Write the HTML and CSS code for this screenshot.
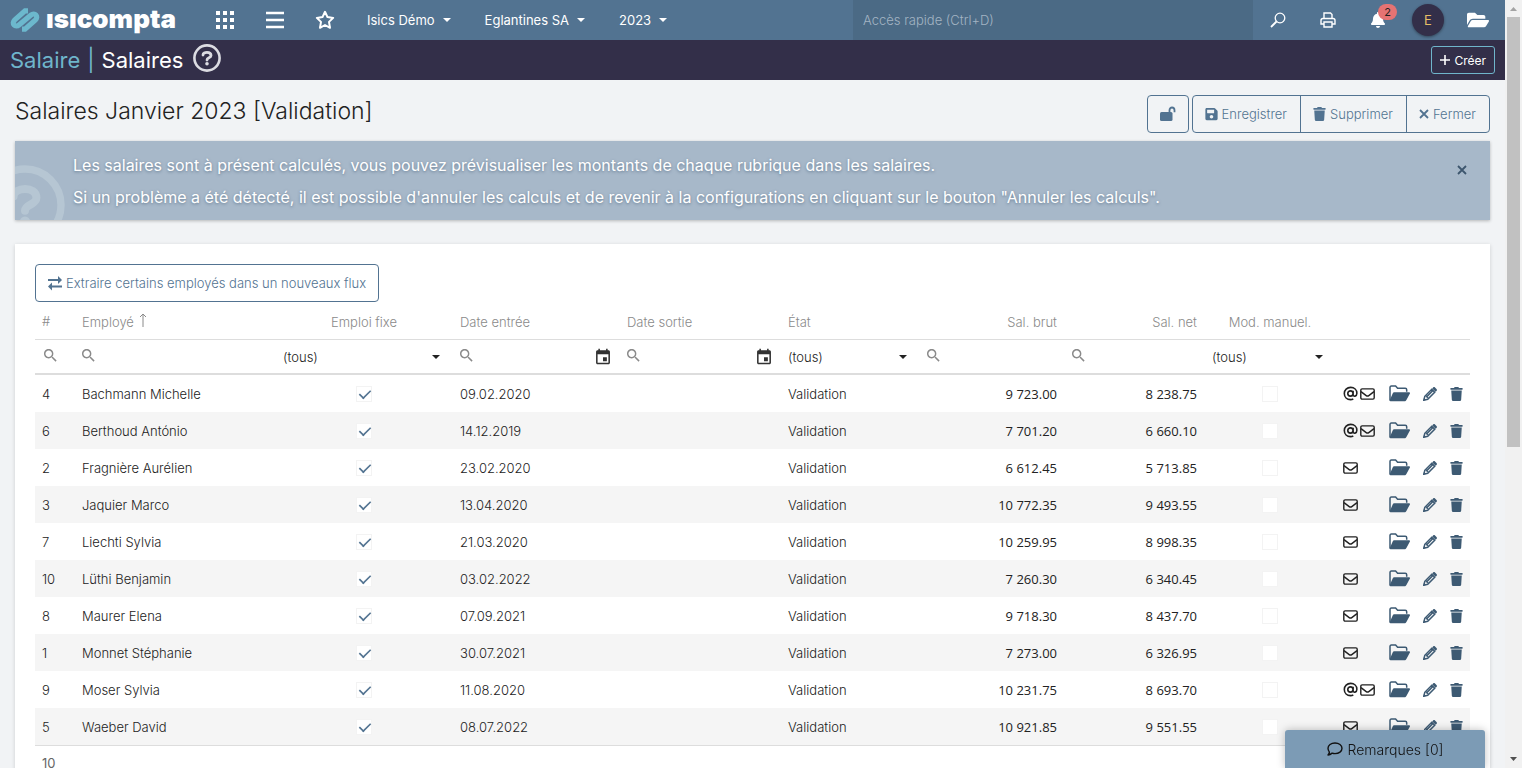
FILE: index.html
```html
<!DOCTYPE html>
<html lang="fr">
	<head>
		<meta charset="UTF-8" />
		<meta name="viewport" content="width=device-width, initial-scale=1.0" />
		<title>Isicompta - Salaires</title>
		<link rel="stylesheet" href="styles.css">
	</head>
	<body>
		<!-- Icon sprite -->
		<svg class="sprite" aria-hidden="true">
			<symbol id="i-search" viewBox="3 3 18 18"><path d="M15.5 14h-.79l-.28-.27C15.41 12.59 16 11.11 16 9.5 16 5.91 13.09 3 9.5 3S3 5.91 3 9.5 5.91 16 9.5 16c1.61 0 3.09-.59 4.23-1.57l.27.28v.79l5 4.99L20.49 19l-4.99-5zm-6 0C7.01 14 5 11.99 5 9.5S7.01 5 9.5 5 14 7.01 14 9.5 11.99 14 9.5 14z"/></symbol>
			<symbol id="i-event" viewBox="2 0 20 22"><path d="M17 12h-5v5h5v-5zM16 1v2H8V1H6v2H5c-1.11 0-1.99.9-1.99 2L3 19c0 1.1.89 2 2 2h14c1.1 0 2-.9 2-2V5c0-1.1-.9-2-2-2h-1V1h-2zm3 18H5V8h14v11z"/></symbol>
			<symbol id="i-caret" viewBox="0 0 10 5"><path d="M0 0h10L5 5z"/></symbol>
			<symbol id="i-trash" viewBox="0 0 448 512"><path d="M432 32H312l-9.4-18.7A24 24 0 0 0 281.1 0H166.8a23.72 23.72 0 0 0-21.4 13.3L136 32H16A16 16 0 0 0 0 48v32a16 16 0 0 0 16 16h416a16 16 0 0 0 16-16V48a16 16 0 0 0-16-16zM32 128l21.2 339a48 48 0 0 0 47.9 45h245.8a48 48 0 0 0 47.9-45L416 128z"/></symbol>
			<symbol id="i-close" viewBox="0 0 10 10"><path d="M1 1l8 8M9 1L1 9" fill="none" stroke="currentColor" stroke-width="1.8"/></symbol>
			<symbol id="i-at" viewBox="0 0 16 16"><path d="M10.8 5v4.3c0 2.5 4 2 4-1.6C14.8 4 12 1.5 8.2 1.5 4.3 1.5 1.4 4.3 1.4 8c0 3.9 2.9 6.500 6.6 6.500 1.2 0 2.2-.3 3-.7M10.700 8a2.800 2.800 0 1 1-5.600 0 2.800 2.800 0 0 1 5.600 0z" fill="none" stroke="currentColor" stroke-width="1.7"/></symbol>
			<symbol id="i-mail" viewBox="0 0 15 12"><g fill="none" stroke="currentColor" stroke-width="1.4"><rect x=".8" y=".9" width="13.4" height="10.2" rx="1.3"/><path d="M1 3.600l5.200 4c.8.6 1.800.6 2.600 0l5.200-4"/></g></symbol>
			<symbol id="i-folder" viewBox="0 0 21 17"><path d="M1 15.500V2.500C1 1.600 1.500 1 2.400 1h4.200l2 2.300h7.600c.9 0 1.500.6 1.500 1.500v2" fill="none" stroke="currentColor" stroke-width="1.5"/><path d="M5.200 7.300h15c.7 0 1 .6.700 1.200l-3.500 6.400c-.5.9-1 1.300-2 1.300H1.500c-.7 0-1-.5-.7-1.100l3-6.800c.3-.6.7-1 1.400-1z"/></symbol>
			<symbol id="i-pencil" viewBox="0 0 14 14"><path d="M9.200 1.400l.9-.9c.6-.6 1.300-.6 1.900 0l1.500 1.500c.6.6.6 1.300 0 1.900l-.9.9z"/><path d="M8.800 2.300l2.900 2.900-7 7-3.900 1 1-3.900zM3.200 9.100l1.700 1.700" fill="none" stroke="currentColor" stroke-width="1.5"/><path d="M4 9.500l5.700-5.700" stroke="currentColor" stroke-width="1.6"/><path d="M.3 13.700l.7-2.600 1.900 1.900z"/></symbol>
			<symbol id="i-help" viewBox="0 0 28 28"><circle cx="14" cy="14" r="12.6" fill="none" stroke="currentColor" stroke-width="2.6"/><path d="M10 11c0-3.400 8-3.800 8 .5 0 2.500-4 2.200-4 4.500" fill="none" stroke="currentColor" stroke-width="2.8" stroke-linecap="round"/><circle cx="14" cy="19.800" r="1.8"/></symbol>
		</svg>

		<div class="page">
			<header class="topbar">
				<a class="logo" href="#">
					<svg viewBox="0 0 30 24" aria-hidden="true">
						<path d="M18 2.800h-3L4.800 11.800C.8 15.800 5.500 20 9 17L21 7c3.500-3 8.200 1.200 4.200 5.200L15 21.200h-3" fill="none" stroke="currentColor" stroke-width="5.200"/>
					</svg>
					<span>ısıcompta</span>
				</a>
				<nav class="menu">
					<button class="icon-btn" aria-label="Applications">
						<svg class="ic18" viewBox="0 0 18 18"><path d="M0 0h4v4H0zM7 0h4v4H7zM14 0h4v4h-4zM0 7h4v4H0zM7 7h4v4H7zM14 7h4v4h-4zM0 14h4v4H0zM7 14h4v4H7zM14 14h4v4h-4z"/></svg>
					</button>
					<button class="icon-btn" aria-label="Menu">
						<svg class="ic18" viewBox="0 0 18 18"><path d="M0 2h18M0 9h18M0 16h18" stroke="currentColor" stroke-width="2.6"/></svg>
					</button>
					<button class="icon-btn" aria-label="Favoris">
						<svg class="ic20" viewBox="0 0 20 20"><path d="M10 1.800l2.500 5.300 5.700.8-4.200 4 1 5.900-5-2.800-5 2.800 1-5.900-4.200-4 5.700-.8z" fill="none" stroke="currentColor" stroke-width="2" stroke-linejoin="round"/></svg>
					</button>
					<button class="drop">Isics Démo <svg><use href="#i-caret"/></svg></button>
					<button class="drop">Eglantines SA <svg><use href="#i-caret"/></svg></button>
					<button class="drop">2023 <svg><use href="#i-caret"/></svg></button>
				</nav>
				<input class="quick" type="text" placeholder="Accès rapide (Ctrl+D)" aria-label="Accès rapide">
				<div class="tools">
					<button class="icon-btn" aria-label="Rechercher">
						<svg class="ic16" viewBox="0 0 16 16"><g fill="none" stroke="currentColor" stroke-width="1.3"><circle cx="10" cy="6" r="4.8"/><path d="M6.500 9.500L1 15" stroke-width="1.8"/></g></svg>
					</button>
					<button class="icon-btn" aria-label="Imprimer">
						<svg class="ic16" viewBox="0 0 16 16"><path d="M4 6V1h6.500L12 2.500V6M4 12H1V8.500C1 7 1.500 6.500 3 6.500h10c1.500 0 2 .5 2 2V12h-3M4 10h8v5H4z" fill="none" stroke="currentColor" stroke-width="1.4"/></svg>
					</button>
					<button class="icon-btn bell" aria-label="Notifications">
						<svg class="ic14" viewBox="0 0 448 512"><path d="M224 512c35.320 0 63.970-28.650 63.970-64H160.030c0 35.350 28.650 64 63.970 64zm215.390-149.710c-19.320-20.760-55.470-51.990-55.470-154.290 0-77.700-54.480-139.900-127.940-155.160V32c0-17.670-14.320-32-31.980-32s-31.980 14.330-31.980 32v20.840C118.560 68.100 64.080 130.300 64.080 208c0 102.300-36.150 133.530-55.470 154.290-6 6.450-8.660 14.160-8.610 21.710.11 16.400 12.980 32 32.100 32h383.800c19.120 0 32-15.600 32.100-32 .05-7.550-2.610-15.270-8.610-21.710z"/></svg>
						<span class="badge">2</span>
					</button>
					<button class="icon-btn" aria-label="Profil"><span class="avatar">E</span></button>
					<button class="icon-btn" aria-label="Documents">
						<svg class="ic22" viewBox="0 0 576 512"><path d="M572.694 292.093L500.270 416.248A63.997 63.997 0 0 1 444.989 448H45.025c-18.523 0-30.064-20.093-20.731-36.093l72.424-124.155A64 64 0 0 1 152 256h399.964c18.523 0 30.064 20.093 20.730 36.093zM152 224h328v-48c0-26.510-21.490-48-48-48H272l-64-64H48C21.490 64 0 85.490 0 112v278.046l69.077-118.418C86.214 242.250 117.989 224 152 224z"/></svg>
					</button>
				</div>
			</header>

			<div class="crumbs">
				<a href="#">Salaire</a>
				<span class="sep">|</span>
				<span>Salaires</span>
				<button class="help" aria-label="Aide"><svg><use href="#i-help"/></svg></button>
				<button class="create">
					<svg viewBox="0 0 10 10"><path d="M5 0v10M0 5h10" stroke="currentColor" stroke-width="1.6"/></svg>
					Créer
				</button>
			</div>

			<main>
				<div class="title-row">
					<h1>Salaires Janvier 2023 [Validation]</h1>
					<button class="btn lock" aria-label="Déverrouiller">
						<svg class="ic16" viewBox="0 0 16 16"><path d="M9.500 7V4.200c0-3.600 5-3.600 5 0v2" fill="none" stroke="currentColor" stroke-width="1.8"/><rect x="0" y="6" width="12.500" height="9" rx="1.5"/></svg>
					</button>
					<div class="btn-group">
						<button class="btn">
							<svg class="ic13" viewBox="0 0 448 512"><path d="M433.941 129.941l-83.882-83.882A48 48 0 0 0 316.118 32H48C21.490 32 0 53.490 0 80v352c0 26.510 21.490 48 48 48h352c26.510 0 48-21.490 48-48V163.882a48 48 0 0 0-14.059-33.941zM224 416c-35.346 0-64-28.654-64-64 0-35.346 28.654-64 64-64s64 28.654 64 64c0 35.346-28.654 64-64 64zm96-304.520V212c0 6.627-5.373 12-12 12H76c-6.627 0-12-5.373-12-12V108c0-6.627 5.373-12 12-12h228.520c3.183 0 6.235 1.264 8.485 3.515l3.480 3.480A11.996 11.996 0 0 1 320 111.480z"/></svg>
							Enregistrer
						</button>
						<button class="btn"><svg class="ic13"><use href="#i-trash"/></svg> Supprimer</button>
						<button class="btn"><svg class="ic10"><use href="#i-close"/></svg> Fermer</button>
					</div>
				</div>

				<div class="notice">
					<svg class="notice-mark"><use href="#i-help"/></svg>
					<p>Les salaires sont à présent calculés, vous pouvez prévisualiser les montants de chaque rubrique dans les salaires.</p>
					<p>Si un problème a été détecté, il est possible d'annuler les calculs et de revenir à la configurations en cliquant sur le bouton "Annuler les calculs".</p>
					<button class="notice-close" aria-label="Fermer le message"><svg class="ic10"><use href="#i-close"/></svg></button>
				</div>

				<section class="card">
					<button class="btn extract">
						<svg class="ic14" viewBox="0 0 14 14"><path d="M0 4h11M14 10.500H3" stroke="currentColor" stroke-width="1.8"/><path d="M10 0l4 4-4 4zM4 6.500l-4 4 4 4z"/></svg>
						Extraire certains employés dans un nouveaux flux
					</button>
					<table>
						<colgroup>
							<col class="w-num"><col><col class="w-fixe"><col class="w-in"><col class="w-out"><col class="w-etat">
							<col class="w-sal"><col class="w-sal"><col class="w-mod"><col class="w-docs"><col class="w-act">
						</colgroup>
						<thead>
							<tr class="heads">
								<th class="num">#</th>
								<th>Employé <svg class="sort" viewBox="0 0 8 14"><path d="M4 14V1M1 4l3-3 3 3" fill="none" stroke="currentColor"/></svg></th>
								<th class="center">Emploi fixe</th>
								<th>Date entrée</th>
								<th>Date sortie</th>
								<th>État</th>
								<th class="right brut">Sal. brut</th>
								<th class="right">Sal. net</th>
								<th class="center">Mod. manuel.</th>
								<th></th>
								<th></th>
							</tr>
							<tr class="filters">
								<td class="num"><label class="find"><svg><use href="#i-search"/></svg><input type="text" aria-label="Filtrer #"></label></td>
								<td><label class="find"><svg><use href="#i-search"/></svg><input type="text" aria-label="Filtrer employé"></label></td>
								<td class="narrow"><label class="pick"><select aria-label="Filtrer emploi fixe"><option>(tous)</option></select><svg><use href="#i-caret"/></svg></label></td>
								<td><div class="find"><svg><use href="#i-search"/></svg><input type="text" aria-label="Filtrer date entrée"><button aria-label="Choisir date entrée"><svg><use href="#i-event"/></svg></button></div></td>
								<td><div class="find"><svg><use href="#i-search"/></svg><input type="text" aria-label="Filtrer date sortie"><button aria-label="Choisir date sortie"><svg><use href="#i-event"/></svg></button></div></td>
								<td><label class="pick"><select aria-label="Filtrer état"><option>(tous)</option></select><svg><use href="#i-caret"/></svg></label></td>
								<td><label class="find"><svg><use href="#i-search"/></svg><input type="text" aria-label="Filtrer salaire brut"></label></td>
								<td><label class="find"><svg><use href="#i-search"/></svg><input type="text" aria-label="Filtrer salaire net"></label></td>
								<td class="narrow"><label class="pick"><select aria-label="Filtrer mod. manuel"><option>(tous)</option></select><svg><use href="#i-caret"/></svg></label></td>
								<td></td>
								<td></td>
							</tr>
						</thead>
						<tbody id="rows"></tbody>
						<tfoot>
							<tr><td class="num">10</td><td colspan="10"></td></tr>
						</tfoot>
					</table>
				</section>
			</main>
		</div>

		<div class="scrollbar" aria-hidden="true">
			<svg viewBox="0 0 7 4"><path d="M0 4h7L3.500 0z"/></svg>
			<span class="thumb"></span>
			<svg class="down" viewBox="0 0 7 4"><path d="M0 0h7L3.500 4z"/></svg>
		</div>

		<button class="remarks">
			<svg class="ic16" viewBox="0 0 16 16"><path d="M8 2c4 0 7 2.300 7 5.300s-3 5.300-7 5.300c-1 0-2-.2-2.900-.5C4 13 2.700 13.800 1 14c.8-.9 1.300-1.900 1.400-2.900C1.500 10 1 8.700 1 7.300 1 4.300 4 2 8 2z" fill="none" stroke="currentColor" stroke-width="1.4" stroke-linejoin="round"/></svg>
			Remarques [0]
		</button>

		<script>
			// num, name, start date, gross, net, sent by e-mail
			const employees = [
				[4, "Bachmann Michelle", "09.02.2020", "9 723.00", "8 238.75", true],
				[6, "Berthoud António", "14.12.2019", "7 701.20", "6 660.10", true],
				[2, "Fragnière Aurélien", "23.02.2020", "6 612.45", "5 713.85", false],
				[3, "Jaquier Marco", "13.04.2020", "10 772.35", "9 493.55", false],
				[7, "Liechti Sylvia", "21.03.2020", "10 259.95", "8 998.35", false],
				[10, "Lüthi Benjamin", "03.02.2022", "7 260.30", "6 340.45", false],
				[8, "Maurer Elena", "07.09.2021", "9 718.30", "8 437.70", false],
				[1, "Monnet Stéphanie", "30.07.2021", "7 273.00", "6 326.95", false],
				[9, "Moser Sylvia", "11.08.2020", "10 231.75", "8 693.70", true],
				[5, "Waeber David", "08.07.2022", "10 921.85", "9 551.55", false],
			];

			const icon = (name) => `<svg class="${name}"><use href="#i-${name}"/></svg>`;

			document.getElementById("rows").innerHTML = employees
				.map(
					([num, name, start, gross, net, email]) => `
						<tr>
							<td class="num">${num}</td>
							<td>${name}</td>
							<td class="center"><input type="checkbox" checked aria-label="Emploi fixe ${name}"></td>
							<td>${start}</td>
							<td></td>
							<td>Validation</td>
							<td class="right amount brut">${gross}</td>
							<td class="right amount">${net}</td>
							<td class="center"><input type="checkbox" aria-label="Mod. manuel ${name}"></td>
							<td><div class="docs">${email ? icon("at") : ""}${icon("mail")}</div></td>
							<td>
								<div class="actions">
									<button aria-label="Ouvrir ${name}">${icon("folder")}</button>
									<button aria-label="Modifier ${name}">${icon("pencil")}</button>
									<button aria-label="Supprimer ${name}">${icon("trash")}</button>
								</div>
							</td>
						</tr>`
				)
				.join("");
		</script>
	</body>
</html>
```
FILE: styles.css
```css
* {
	margin: 0;
	padding: 0;
	box-sizing: border-box;
}

body {
	display: grid;
	grid-template-columns: 1fr 17px;
	height: 100vh;
	overflow: hidden;
	font-family: Inter, "Liberation Sans", sans-serif;
	font-size: 13px;
	font-weight: 300;
	color: #222;
	background: #f1f3f5;
}

button,
input,
select {
	font: inherit;
	color: inherit;
	background: none;
	border: 0;
	outline: 0;
}

svg {
	display: block;
	flex: none;
	fill: currentColor;
}

a {
	color: inherit;
	text-decoration: none;
}

.sprite {
	position: absolute;
	width: 0;
	height: 0;
}

.ic10 { width: 10px; height: 10px; }
.ic13 { width: 13px; height: 14px; }
.ic14 { width: 14px; height: 16px; }
.ic16 { width: 16px; height: 16px; }
.ic18 { width: 18px; height: 18px; }
.ic20 { width: 20px; height: 20px; }
.ic22 { width: 22px; height: 20px; }

.page {
	min-width: 0;
	overflow: hidden;
}

/* Top bar */
.topbar {
	display: flex;
	height: 40px;
	background: #527391;
	color: #fff;
}

.logo {
	display: flex;
	align-items: center;
	gap: 6px;
	width: 200px;
	padding-left: 10px;
	font-size: 26px;
	font-weight: 900;
	line-height: 38px;
}

.logo svg {
	width: 30px;
	height: 24px;
	color: #6cb8cd;
}

.logo span {
	padding-bottom: 2px;
}

.menu {
	display: flex;
	flex: 1;
}

.icon-btn {
	display: flex;
	align-items: center;
	justify-content: center;
	width: 50px;
	height: 40px;
}

.drop {
	display: flex;
	align-items: center;
	gap: 8px;
	padding: 0 17px;
	font-weight: 400;
}

.drop svg {
	width: 8px;
	height: 4px;
}

.quick {
	width: 400px;
	padding: 0 10px;
	background: #4b6a85;
}

.quick::placeholder {
	color: #a3b4c3;
	opacity: 1;
}

.tools {
	display: flex;
	padding-right: 2px;
}

.bell {
	position: relative;
}

.badge {
	position: absolute;
	top: 4px;
	right: 6px;
	width: 19px;
	height: 16px;
	border-radius: 8px;
	background: #e57373;
	color: #222;
	font-size: 11px;
	font-weight: 400;
	line-height: 16px;
}

.avatar {
	width: 32px;
	height: 32px;
	border-radius: 50%;
	background: #332f49;
	box-shadow: 0 1px 3px rgba(0, 0, 0, 0.4);
	color: #e5bd66;
	font-weight: 400;
	line-height: 32px;
}

/* Breadcrumb bar */
.crumbs {
	display: flex;
	align-items: center;
	gap: 7px;
	height: 40px;
	padding: 0 10px;
	background: #332f49;
	color: #fff;
	font-size: 22px;
	font-weight: 400;
}

.crumbs a,
.sep {
	color: #6fb5cb;
}

.help {
	margin-left: 3px;
	color: #dcdce2;
}

.help svg {
	width: 28px;
	height: 28px;
	margin-bottom: 4px;
}

.create {
	display: flex;
	align-items: center;
	gap: 4px;
	height: 28px;
	margin-left: auto;
	padding: 0 8px;
	border: 1px solid #6fb5cb;
	border-radius: 3px;
	font-size: 12px;
	font-weight: 400;
}

.create svg {
	width: 10px;
	height: 10px;
}

main {
	padding: 15px;
}

.title-row {
	display: flex;
	gap: 3px;
	margin-bottom: 8px;
}

h1 {
	flex: 1;
	font-size: 23px;
	font-weight: 300;
	line-height: 32px;
}

.btn {
	display: flex;
	align-items: center;
	gap: 4px;
	height: 38px;
	padding: 0 12px;
	border: 1px solid #527391;
	border-radius: 4px;
	color: #527391;
}

.btn-group {
	display: flex;
}

.btn-group .btn {
	padding: 0 13px 0 12px;
}

.btn-group .btn + .btn {
	margin-left: -1px;
}

.btn-group .btn:not(:first-child) {
	border-top-left-radius: 0;
	border-bottom-left-radius: 0;
}

.btn-group .btn:not(:last-child) {
	border-top-right-radius: 0;
	border-bottom-right-radius: 0;
}

/* Information banner */
.notice {
	position: relative;
	overflow: hidden;
	margin-bottom: 24px;
	padding: 8px 58px 7px;
	background: #a7b8c9;
	box-shadow: 0 1px 3px rgba(0, 0, 0, 0.25);
	color: #fff;
	font-size: 16px;
	font-weight: 400;
	line-height: 32px;
	text-shadow: 0 1px 3px rgba(60, 85, 110, 0.6);
}

.notice-mark {
	position: absolute;
	top: 24px;
	left: -30px;
	width: 80px;
	height: 80px;
	color: #b6c6d3;
}

.notice-close {
	position: absolute;
	top: 24px;
	right: 23px;
	color: #3d566e;
}

.card {
	padding: 20px;
	background: #fff;
	box-shadow: 0 1px 4px rgba(0, 0, 0, 0.15);
}

/* Salary table */
table {
	width: 100%;
	table-layout: fixed;
	border-collapse: separate;
	border-spacing: 0;
}

.w-num { width: 37px; }
.w-fixe { width: 172px; }
.w-in { width: 167px; }
.w-out { width: 161px; }
.w-etat { width: 139px; }
.w-sal { width: 145px; }
.w-mod { width: 126px; }
.w-docs { width: 46px; }
.w-act { width: 91px; }

th,
td {
	height: 37px;
	padding: 0 10px;
	text-align: left;
	white-space: nowrap;
}

th {
	height: 38px;
	padding-top: 2px;
	border-bottom: 1px solid #ddd;
	color: #8a8a8a;
	font-weight: 300;
}

.num {
	padding: 0 7px;
}

.center {
	text-align: center;
}

.right {
	text-align: right;
}

.brut {
	padding-right: 5px;
}

.narrow {
	padding-left: 5px;
}

.amount {
	font-family: "Open Sans", "Noto Sans", sans-serif;
	font-weight: 400;
}

.sort {
	display: inline-block;
	width: 8px;
	height: 14px;
	margin-left: 1px;
}

.filters td {
	height: 35px;
	border-bottom: 2px solid #ddd;
}

.filters .num {
	padding-left: 9px;
}

.find,
.pick {
	display: flex;
	align-items: center;
}

.find > svg {
	width: 13px;
	height: 13px;
	margin-bottom: 2px;
	color: #8a8a8a;
}

.find input {
	flex: 1;
	min-width: 0;
	height: 24px;
}

.find button svg {
	width: 16px;
	height: 17px;
	color: #333;
}

.filters td:has(button) {
	padding-right: 6px;
}

.pick select {
	flex: 1;
	appearance: none;
}

.pick svg {
	width: 8px;
	height: 4px;
}

tbody tr:nth-child(even) {
	background: #f5f5f5;
}

input[type="checkbox"] {
	display: block;
	width: 16px;
	height: 16px;
	margin: 0 auto;
	padding: 2px 1px;
	appearance: none;
	background: #fff;
	border: 1px solid #f3f3f3;
}

input[type="checkbox"]:checked::before {
	content: "";
	display: block;
	width: 12px;
	height: 6px;
	border: solid #527391;
	border-width: 0 0 2px 2px;
	transform: rotate(-45deg) scale(0.8);
}

.docs {
	display: flex;
	align-items: center;
	gap: 2px;
}

.at {
	width: 15px;
	height: 15px;
}

.mail {
	width: 15px;
	height: 12px;
}

.actions {
	display: flex;
	align-items: center;
	gap: 13px;
	color: #3d5a73;
}

.folder {
	width: 21px;
	height: 17px;
}

.pencil {
	width: 14px;
	height: 14px;
}

.trash {
	width: 13px;
	height: 14px;
}

tfoot td {
	height: 34px;
	border-top: 1px solid #ddd;
	color: #666;
	font-weight: 400;
}

/* Window scroll bar */
.scrollbar {
	display: flex;
	flex-direction: column;
	align-items: center;
	padding: 7px 0;
	background: #f1f1f1;
	color: #a3a3a3;
}

.scrollbar svg {
	width: 7px;
	height: 4px;
}

.thumb {
	width: 13px;
	height: 57%;
	margin: 6px 0 auto;
	background: #c1c1c1;
}

.down {
	color: #505050;
}

.remarks {
	position: fixed;
	right: 37px;
	bottom: 0;
	display: flex;
	align-items: center;
	justify-content: center;
	gap: 5px;
	width: 200px;
	height: 38px;
	border-radius: 3px 3px 0 0;
	background: #7c9bb5;
	box-shadow: 0 0 8px rgba(0, 0, 0, 0.25);
	color: #111;
	font-size: 14px;
}
```
